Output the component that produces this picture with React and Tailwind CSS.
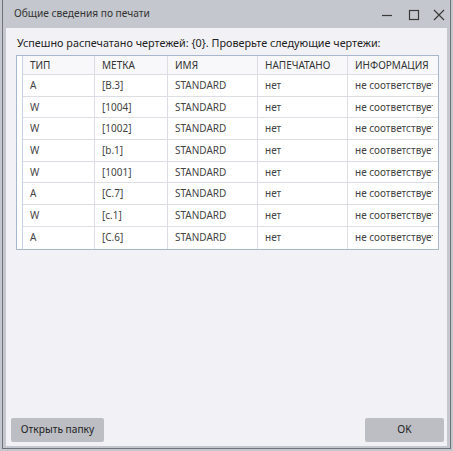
import React from 'react';

const rows = [
    ['A', '[B.3]'],
    ['W', '[1004]'],
    ['W', '[1002]'],
    ['W', '[b.1]'],
    ['W', '[1001]'],
    ['A', '[C.7]'],
    ['W', '[c.1]'],
    ['A', '[C.6]'],
];

const cols = ['w-[72px]', 'w-[73px]', 'w-[90px]', 'w-[90px]', 'w-[90px]'];
const headers = ['ТИП', 'МЕТКА', 'ИМЯ', 'НАПЕЧАТАНО', 'ИНФОРМАЦИЯ'];

const Cell = ({ w, children, last }) => (
    <div className={`${w} shrink-0 h-full flex items-center pl-[7px] overflow-hidden whitespace-nowrap ${last ? '' : 'border-r border-[#dcdee3]'}`}>
        {children}
    </div>
);

const App = () => {
    return (
        <div
            className="w-[453px] h-[451px] bg-[#c4c7cd] px-[2px] pb-[2px] flex flex-col text-[#333]"
            style={{ fontFamily: '"Noto Sans", "Open Sans", sans-serif' }}
        >
            <div className="flex-1 flex flex-col border-x border-b border-[#6f7278] px-[3px] pb-[2px]">
                {/* title bar */}
                <div className="h-[28px] shrink-0 flex items-center pl-[8px]">
                    <span className="text-[10.2px] text-[#333]">Общие сведения по печати</span>
                    <div className="ml-auto flex items-center h-full">
                        <svg width="12" height="12" viewBox="0 0 12 12" className="mr-[15px] mt-[2px]">
                            <path d="M1 6.5h10" stroke="#3a3a3a" strokeWidth="1.2" />
                        </svg>
                        <svg width="12" height="12" viewBox="0 0 12 12" className="mr-[13px] mt-[2px]">
                            <rect x="1.5" y="1.5" width="9" height="9" fill="none" stroke="#3a3a3a" strokeWidth="1.2" />
                        </svg>
                        <svg width="12" height="12" viewBox="0 0 12 12" className="mr-[2px] mt-[2px]">
                            <path d="M1 1l10 10M11 1L1 11" stroke="#3a3a3a" strokeWidth="1.2" />
                        </svg>
                    </div>
                </div>

                {/* content */}
                <div className="flex-1 bg-[#f2f2f6] flex flex-col">
                    <div className="pl-[11px] pt-[7px] h-[27px] text-[10.8px] text-[#222]">
                        Успешно распечатано чертежей: {'{0}'}. Проверьте следующие чертежи:
                    </div>
                    <div className="ml-[10px] w-[423px] border border-[#a9b7cc] bg-white flex text-[10px] text-[#444]">
                        <div className="w-[6px] border-r border-[#c9d2df] shrink-0" />
                        <div className="flex flex-col">
                            <div className="h-[19px] flex border-b border-[#dcdee3] bg-[#f8f8fa] text-[#333]">
                                {headers.map((h, i) => (
                                    <Cell key={h} w={cols[i]} last={i === 4}>{h}</Cell>
                                ))}
                            </div>
                            {rows.map(([t, m], idx) => (
                                <div key={idx} className={`h-[21.7px] flex ${idx === rows.length - 1 ? '' : 'border-b border-[#dcdee3]'}`}>
                                    <Cell w={cols[0]}>{t}</Cell>
                                    <Cell w={cols[1]}>{m}</Cell>
                                    <Cell w={cols[2]}>STANDARD</Cell>
                                    <Cell w={cols[3]}>нет</Cell>
                                    <Cell w={cols[4]} last>
                                        <span className="block w-[78px] overflow-hidden">не соответствует</span>
                                    </Cell>
                                </div>
                            ))}
                        </div>
                    </div>

                    <div className="mt-auto flex justify-between pl-[5px] pr-[3px] pb-[4px]">
                        <button className="w-[93px] h-[24px] rounded-[2px] bg-[#bcbec4] text-[10.2px] text-[#222]">
                            Открыть папку
                        </button>
                        <button className="w-[79px] h-[24px] rounded-[2px] bg-[#bcbec4] text-[10.2px] text-[#222]">
                            OK
                        </button>
                    </div>
                </div>
            </div>
        </div>
    );
};

export default App;
